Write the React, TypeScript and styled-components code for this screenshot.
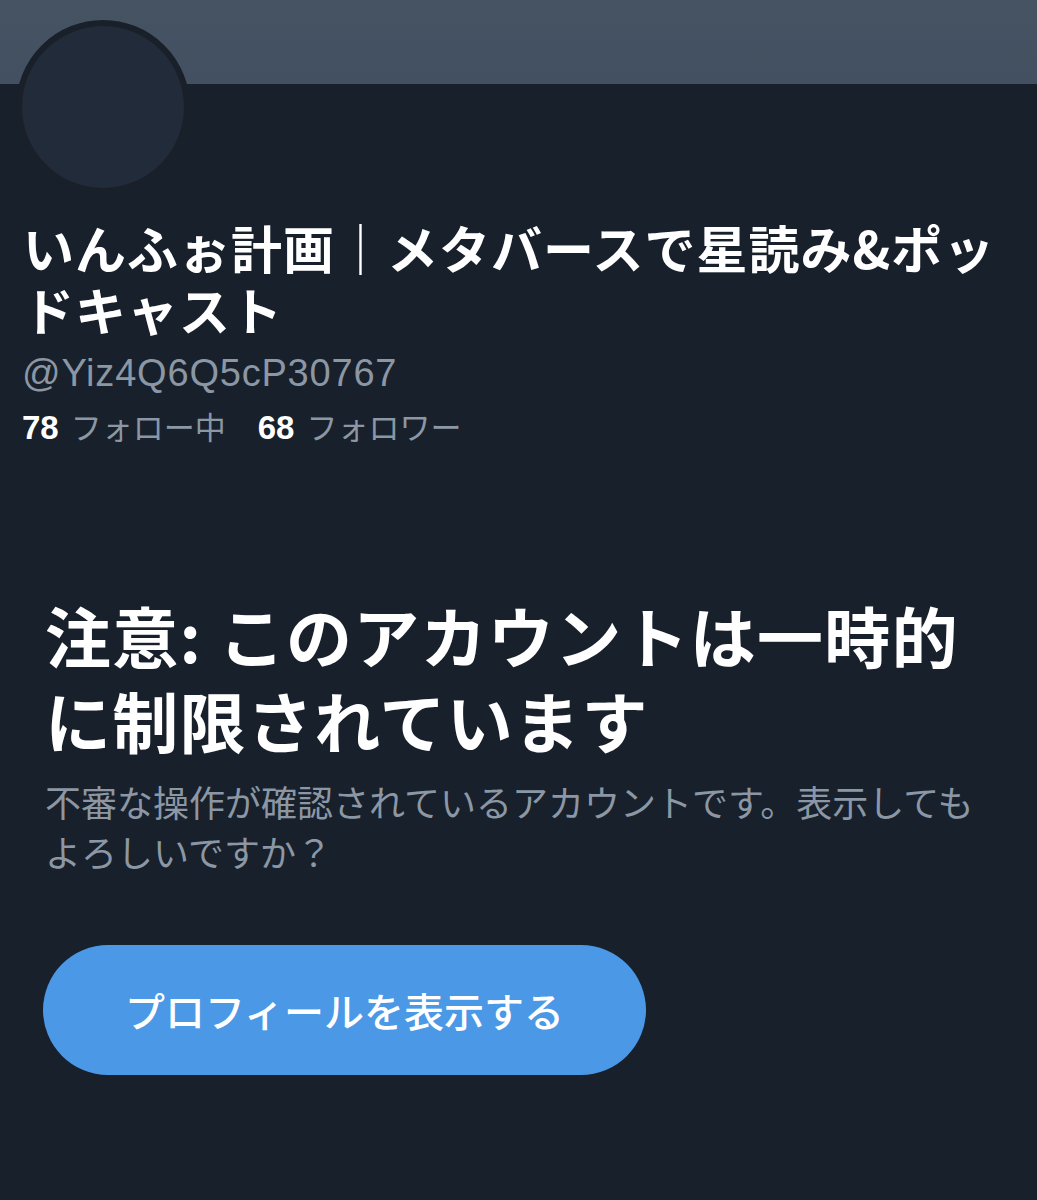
import styled, { createGlobalStyle } from 'styled-components'

const Global = createGlobalStyle`
  html, body {
    margin: 0;
    padding: 0;
    background: #18202b;
  }
  body {
    font-family: "Liberation Sans", "Noto Sans CJK JP", sans-serif;
  }
`

const Page = styled.div`
  width: 1037px;
  min-height: 1200px;
  background: #18202b;
  overflow: hidden;
`

const Banner = styled.div`
  height: 84px;
  background: linear-gradient(180deg, #465363 0%, #435061 100%);
`

const Header = styled.div`
  padding: 0 22px;
`

const Avatar = styled.div`
  width: 162px;
  height: 162px;
  margin-top: -64px;
  margin-left: -6px;
  border-radius: 50%;
  background: #212b39;
  border: 6px solid #19202a;
`

const Name = styled.h1`
  margin: 22px 0 0;
  padding-left: 1px;
  font-family: "Noto Sans CJK JP", sans-serif;
  font-size: 51px;
  line-height: 62px;
  font-weight: 700;
  color: #ffffff;
  letter-spacing: 1px;
  white-space: nowrap;
`

const Handle = styled.div`
  margin-top: 10px;
  font-size: 38px;
  line-height: 46px;
  letter-spacing: 0.8px;
  color: #8b97a4;
`

const Stats = styled.div`
  display: flex;
  gap: 32px;
  margin-top: 10px;
  font-size: 31px;
  line-height: 40px;
`

const Stat = styled.span`
  color: #8b97a4;
  font-family: "Noto Sans CJK JP", sans-serif;

  b {
    color: #ffffff;
    font-size: 33px;
    font-weight: 700;
    margin-right: 12px;
    font-family: "Liberation Sans", sans-serif;
  }
`

const Notice = styled.section`
  padding: 0 45px;
  margin-top: 144px;
`

const Title = styled.h2`
  margin: 0;
  font-family: "Noto Sans CJK JP", sans-serif;
  font-size: 66px;
  line-height: 85px;
  font-weight: 700;
  letter-spacing: 1.3px;
  color: #ffffff;
  white-space: nowrap;
`

const Desc = styled.p`
  margin: 14px 0 0;
  font-family: "Noto Sans CJK JP", sans-serif;
  font-size: 36px;
  line-height: 50px;
  color: #8b97a4;
  font-weight: 400;
  white-space: nowrap;
`

const Button = styled.button`
  margin-top: 69px;
  margin-left: -2px;
  width: 603px;
  height: 130px;
  border: none;
  border-radius: 65px;
  background: #4a98e6;
  color: #ffffff;
  font-family: "Noto Sans CJK JP", sans-serif;
  font-size: 40px;
  font-weight: 500;
  display: flex;
  align-items: center;
  justify-content: center;
  cursor: pointer;
`

function App() {
  return (
    <Page>
      <Global />
      <Banner />
      <Header>
        <Avatar />
        <Name>
          いんふぉ計画｜メタバースで星読み&ポッ
          <br />
          ドキャスト
        </Name>
        <Handle>@Yiz4Q6Q5cP30767</Handle>
        <Stats>
          <Stat><b>78</b>フォロー中</Stat>
          <Stat><b>68</b>フォロワー</Stat>
        </Stats>
      </Header>
      <Notice>
        <Title>
          注意: このアカウントは一時的
          <br />
          に制限されています
        </Title>
        <Desc>
          不審な操作が確認されているアカウントです。表示しても
          <br />
          よろしいですか？
        </Desc>
        <Button>プロフィールを表示する</Button>
      </Notice>
    </Page>
  )
}

export default App
